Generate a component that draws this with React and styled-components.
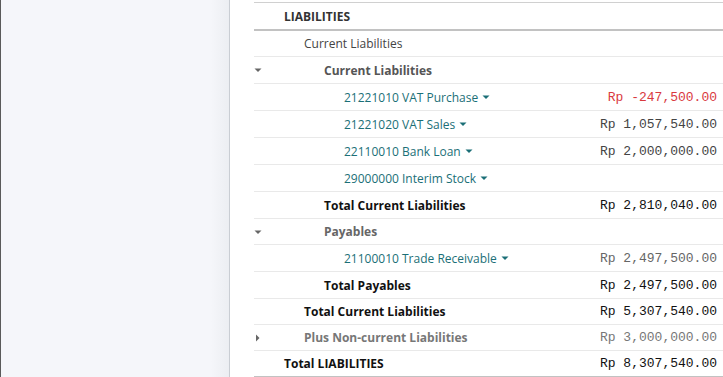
import React from "react";
import styled, { createGlobalStyle } from "styled-components";

const Global = createGlobalStyle`
  html, body { margin: 0; padding: 0; background: #fff; }
  body { font-family: "Open Sans", "Noto Sans", sans-serif; }
`;

const Page = styled.div`
  display: flex;
  width: 723px;
  height: 377px;
  overflow: hidden;
  background: #fff;
`;

const Sidebar = styled.aside`
  flex: 0 0 230px;
  box-sizing: border-box;
  border-left: 1px solid #5a5a5a;
  border-right: 1px solid #c9cdd3;
  background: linear-gradient(to right, #f5f6fa 0%, #f5f6fa 92%, #eceef2 100%);
`;

const Main = styled.main`
  flex: 1;
  padding: 2px 0 0 24px;
  min-width: 0;
`;

const Report = styled.div`
  border-top: 1px solid #d0d0d0;
`;

const Row = styled.div`
  display: flex;
  align-items: center;
  height: ${(p) => p.$h || 26}px;
  border-bottom: ${(p) => p.$border || "1px solid #e9e9e9"};
  font-size: 12px;
`;

const Toggle = styled.span`
  flex: 0 0 ${(p) => p.$indent}px;
  display: flex;
  align-items: center;
`;

const Label = styled.span`
  flex: 1;
  color: ${(p) => p.$color || "#444"};
  font-weight: ${(p) => (p.$bold ? 700 : 400)};
  white-space: nowrap;
  display: flex;
  align-items: center;
  gap: 4px;
`;

const Amount = styled.span`
  font-family: "Liberation Mono", "Courier New", monospace;
  font-size: 13px;
  color: ${(p) => p.$color || "#333"};
  padding-right: 6px;
  white-space: pre;
`;

const Caret = ({ dir = "down", color = "#555" }) => (
  <svg width="8" height="8" viewBox="0 0 8 8" style={{ display: "block" }}>
    {dir === "down" ? (
      <polygon points="0.5,2.5 7.5,2.5 4,6" fill={color} />
    ) : (
      <polygon points="2,0.5 5.5,4 2,7.5" fill={color} />
    )}
  </svg>
);

const TEAL = "#1b6f77";

const rows = [
  { label: "Current Liabilities", level: 1, color: "#444", h: 25 },
  { label: "Current Liabilities", level: 2, bold: true, color: "#555", caret: "down", h: 26 },
  { label: "21221010 VAT Purchase", level: 3, color: TEAL, account: true, amount: "Rp -247,500.00", amountColor: "#d9393e", h: 26 },
  { label: "21221020 VAT Sales", level: 3, color: TEAL, account: true, amount: "Rp 1,057,540.00", amountColor: "#444", h: 26 },
  { label: "22110010 Bank Loan", level: 3, color: TEAL, account: true, amount: "Rp 2,000,000.00", amountColor: "#444", h: 26 },
  { label: "29000000 Interim Stock", level: 3, color: TEAL, account: true, h: 26 },
  { label: "Total Current Liabilities", level: 2, bold: true, color: "#111", amount: "Rp 2,810,040.00", amountColor: "#111", h: 26 },
  { label: "Payables", level: 2, bold: true, color: "#666", caret: "down", h: 25 },
  { label: "21100010 Trade Receivable", level: 3, color: TEAL, account: true, amount: "Rp 2,497,500.00", amountColor: "#666", h: 26 },
  { label: "Total Payables", level: 2, bold: true, color: "#111", amount: "Rp 2,497,500.00", amountColor: "#111", h: 26 },
  { label: "Total Current Liabilities", level: 1, bold: true, color: "#111", amount: "Rp 5,307,540.00", amountColor: "#111", h: 25 },
  { label: "Plus Non-current Liabilities", level: 1, bold: true, color: "#777", caret: "right", amount: "Rp 3,000,000.00", amountColor: "#777", h: 25 },
  { label: "Total LIABILITIES", level: 0, bold: true, color: "#111", amount: "Rp 8,307,540.00", amountColor: "#111", h: 25, last: true },
];

export default function App() {
  return (
    <>
      <Global />
      <Page>
        <Sidebar />
        <Main>
          <Report>
            <Row $h={26} $border="2px solid #c2c2c2">
              <Toggle $indent={30} />
              <Label $bold $color="#333">LIABILITIES</Label>
            </Row>
            {rows.map((r, i) => (
              <Row
                key={i}
                $h={r.h}
                $border={r.last ? "2px solid #c2c2c2" : undefined}
              >
                <Toggle $indent={30 + r.level * 20}>
                  {r.caret && <Caret dir={r.caret} color="#666" />}
                </Toggle>
                <Label $bold={r.bold} $color={r.color}>
                  {r.label}
                  {r.account && <Caret color={TEAL} />}
                </Label>
                {r.amount && <Amount $color={r.amountColor}>{r.amount}</Amount>}
              </Row>
            ))}
          </Report>
        </Main>
      </Page>
    </>
  );
}
